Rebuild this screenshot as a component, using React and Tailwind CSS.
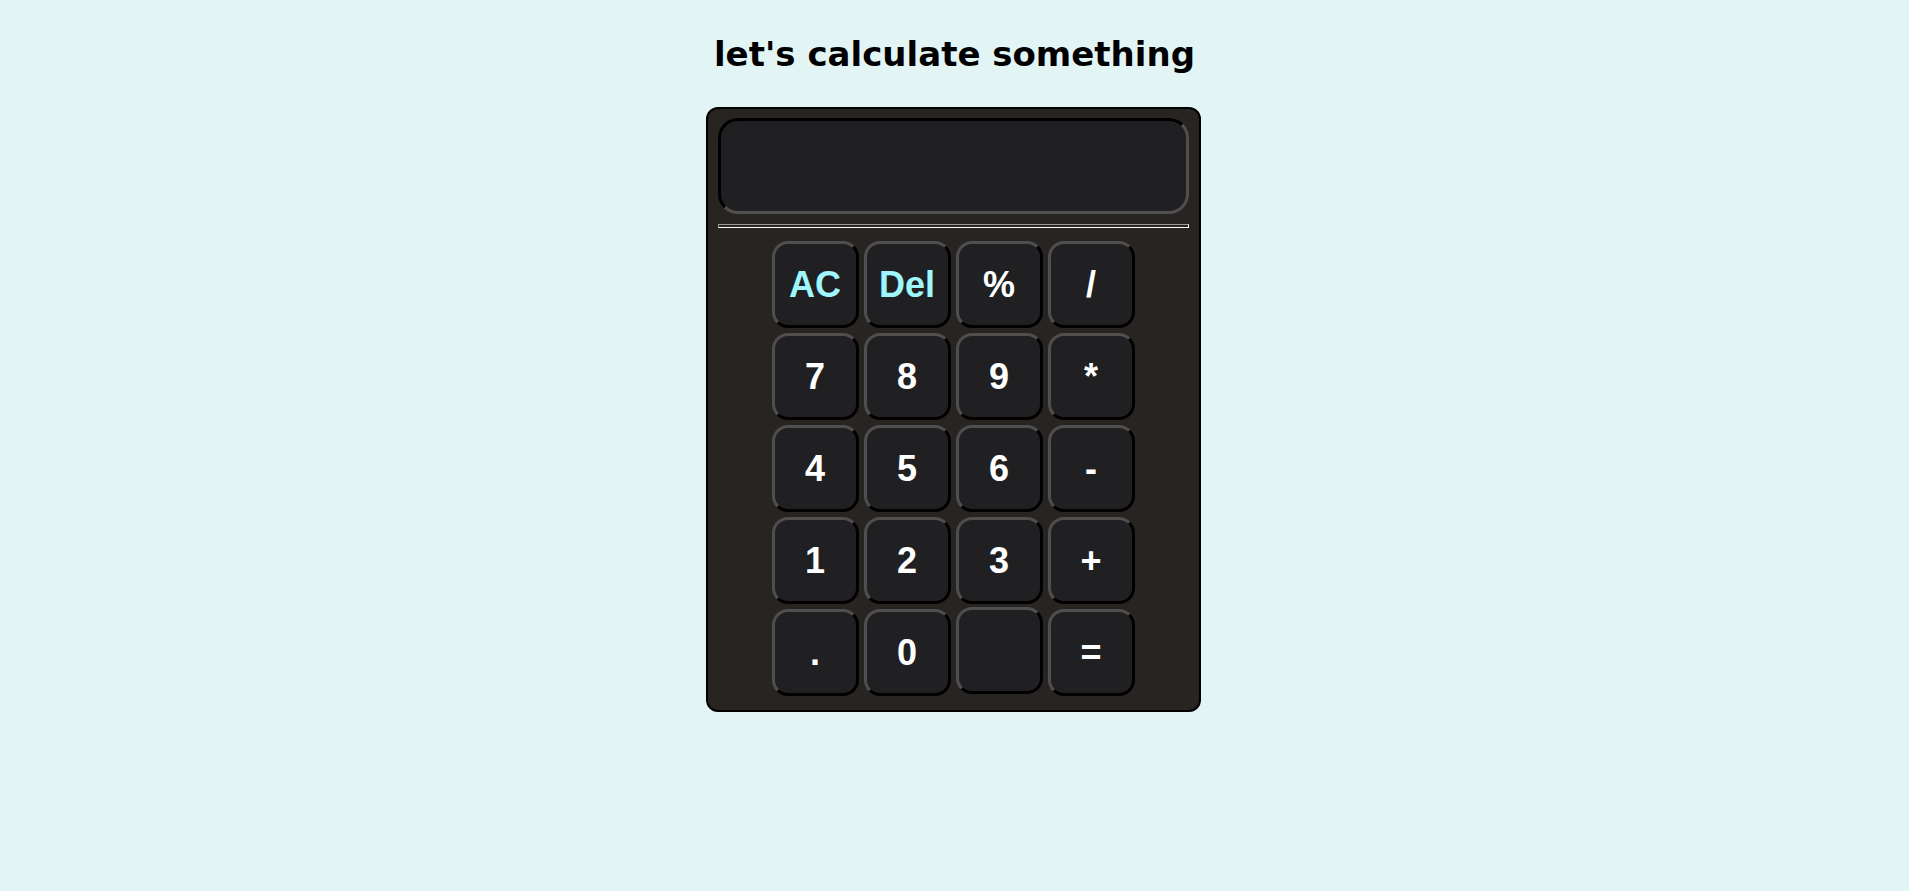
const keys = [
  { label: 'AC', accent: true },
  { label: 'Del', accent: true },
  { label: '%' },
  { label: '/' },
  { label: '7' },
  { label: '8' },
  { label: '9' },
  { label: '*' },
  { label: '4' },
  { label: '5' },
  { label: '6' },
  { label: '-' },
  { label: '1' },
  { label: '2' },
  { label: '3' },
  { label: '+' },
  { label: '.' },
  { label: '0' },
  { label: '', empty: true },
  { label: '=' },
]

function Key({ label, accent, empty }) {
  return (
    <button
      className={
        'w-[87px] h-[87px] rounded-[16px] bg-[#202022] border-[3px] border-t-[#4f4f4f] border-l-[#4f4f4f] border-b-black border-r-black flex items-center justify-center font-bold text-[36px] leading-none font-["Liberation_Sans",Arial,sans-serif] ' +
        (accent ? 'text-[#a0f6fd] ' : 'text-white ') +
        (empty ? '-mt-[2px]' : '')
      }
    >
      {label}
    </button>
  )
}

export default function App() {
  return (
    <div className="min-h-[891px] bg-[#e3f4f4] flex flex-col items-center pt-[34px]">
      <h1 className='text-[34px] font-bold leading-[40px] text-black font-["Comic_Sans_MS","DejaVu_Sans",cursive]'>
        let's calculate something
      </h1>
      <div className="mt-[33px] mr-[3px] w-[495px] h-[605px] bg-[#282422] border-2 border-black rounded-[12px] px-[10px] pt-[9px]">
        <div className="h-[96px] rounded-[20px] bg-[#202022] border-[3px] border-t-black border-l-black border-b-[#4f4f4f] border-r-[#4f4f4f]" />
        <div className="mt-[10px] h-[4px] border border-t-[#9a9a9a] border-l-[#9a9a9a] border-b-white border-r-white bg-[#282422]" />
        <div className="mt-[13px] grid grid-cols-[repeat(4,87px)] gap-[5px] justify-center">
          {keys.map((k, i) => (
            <Key key={i} {...k} />
          ))}
        </div>
      </div>
    </div>
  )
}
